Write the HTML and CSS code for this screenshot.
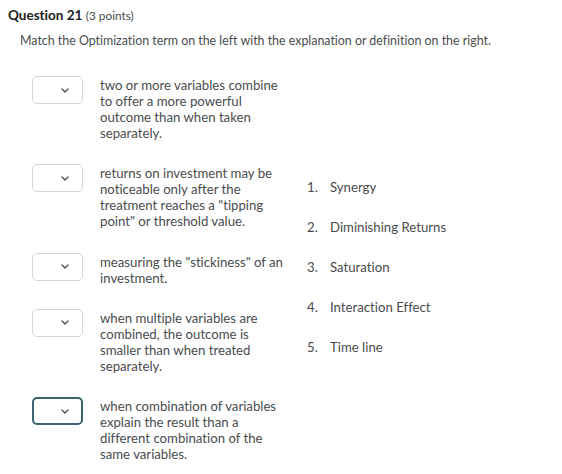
FILE: index.html
```html
<!DOCTYPE html>
<html>
<head>
<meta charset="utf-8">
<link rel="stylesheet" href="styles.css">
</head>
<body>
<div class="page">
  <h1 class="title"><span class="qnum">Question 21</span> <span class="pts">(3 points)</span></h1>
  <p class="prompt">Match the Optimization term on the left with the explanation or definition on the right.</p>
  <div class="match">
    <div class="left">
      <div class="row">
        <div class="select"><svg class="chev" width="8" height="5" viewBox="0 0 8 5"><path d="M1 1l3 3 3-3" fill="none" stroke="#494c4e" stroke-width="1.3" stroke-linecap="round" stroke-linejoin="round"/></svg></div>
        <div class="desc">two or more variables combine to offer a more powerful outcome than when taken separately.</div>
      </div>
      <div class="row">
        <div class="select"><svg class="chev" width="8" height="5" viewBox="0 0 8 5"><path d="M1 1l3 3 3-3" fill="none" stroke="#494c4e" stroke-width="1.3" stroke-linecap="round" stroke-linejoin="round"/></svg></div>
        <div class="desc">returns on investment may be noticeable only after the treatment reaches a "tipping point" or threshold value.</div>
      </div>
      <div class="row">
        <div class="select"><svg class="chev" width="8" height="5" viewBox="0 0 8 5"><path d="M1 1l3 3 3-3" fill="none" stroke="#494c4e" stroke-width="1.3" stroke-linecap="round" stroke-linejoin="round"/></svg></div>
        <div class="desc">measuring the "stickiness" of an investment.</div>
      </div>
      <div class="row">
        <div class="select"><svg class="chev" width="8" height="5" viewBox="0 0 8 5"><path d="M1 1l3 3 3-3" fill="none" stroke="#494c4e" stroke-width="1.3" stroke-linecap="round" stroke-linejoin="round"/></svg></div>
        <div class="desc">when multiple variables are combined, the outcome is smaller than when treated separately.</div>
      </div>
      <div class="row">
        <div class="select focus"><svg class="chev" width="8" height="5" viewBox="0 0 8 5"><path d="M1 1l3 3 3-3" fill="none" stroke="#494c4e" stroke-width="1.3" stroke-linecap="round" stroke-linejoin="round"/></svg></div>
        <div class="desc">when combination of variables explain the result than a different combination of the same variables.</div>
      </div>
    </div>
    <ol class="right">
      <li><span class="num">1.</span><span>Synergy</span></li>
      <li><span class="num">2.</span><span>Diminishing Returns</span></li>
      <li><span class="num">3.</span><span>Saturation</span></li>
      <li><span class="num">4.</span><span>Interaction Effect</span></li>
      <li><span class="num">5.</span><span>Time line</span></li>
    </ol>
  </div>
</div>
</body>
</html>
```

FILE: styles.css
```css
* { box-sizing: border-box; }
html, body { margin: 0; padding: 0; background: #fff; }
body {
  font-family: Lato, "Open Sans", sans-serif;
  color: #494c4e;
  font-variant-ligatures: none;
}
.page { padding: 5px 0 0 8px; }
.title {
  margin: 0;
  font-size: 13.5px;
  line-height: 20px;
  font-weight: 400;
  color: #202122;
}
.qnum { font-weight: 700; }
.pts { font-size: 11.8px; color: #494c4e; }
.prompt {
  margin: 5px 0 0 12px;
  font-size: 12.4px;
  line-height: 20px;
}
.match {
  display: flex;
  margin-top: 25px;
  margin-left: 24px;
}
.left {
  display: flex;
  flex-direction: column;
  gap: 23.3px;
  width: 275px;
}
.row { display: flex; align-items: flex-start; }
.select {
  width: 51px;
  height: 28px;
  border: 1px solid #cdd5dc;
  border-radius: 5px;
  display: flex;
  align-items: center;
  justify-content: flex-end;
  padding-right: 13px;
  flex: none;
}
.select.focus { border: 2px solid #3b6572; padding-right: 12px; }
.chev { display: block; }
.desc {
  margin-left: 17px;
  padding-top: 1px;
  width: 187px;
  font-size: 13.2px;
  line-height: 16px;
}
.right {
  list-style: none;
  margin: 103px 0 0 0;
  padding: 0;
  display: flex;
  flex-direction: column;
  gap: 24px;
  font-size: 13.2px;
  line-height: 16px;
}
.right li { display: flex; }
.num { width: 23px; }
```
